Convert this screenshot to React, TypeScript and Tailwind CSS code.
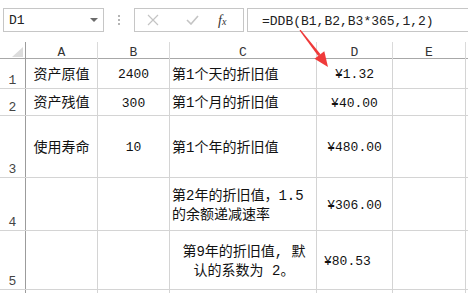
import React from 'react'

const mono = "font-['Liberation_Mono','Noto_Sans_CJK_SC',monospace]"

type Row = {
  n: number
  h: string
  a?: string
  b?: string
  c?: React.ReactNode
  cAlign?: string
  d?: string
  dAlign?: string
}

const rows: Row[] = [
  { n: 1, h: 'h-[30px]', a: '资产原值', b: '2400', c: '第1个天的折旧值', d: '¥1.32' },
  { n: 2, h: 'h-[27px]', a: '资产残值', b: '300', c: '第1个月的折旧值', d: '¥40.00' },
  { n: 3, h: 'h-[62px]', a: '使用寿命', b: '10', c: '第1个年的折旧值', d: '¥480.00' },
  {
    n: 4,
    h: 'h-[53px]',
    c: (
      <>
        第2年的折旧值，1.5
        <br />
        的余额递减速率
      </>
    ),
    d: '¥306.00',
  },
  {
    n: 5,
    h: 'h-[59px]',
    c: (
      <>
        第9年的折旧值, 默
        <br />
        认的系数为 2。
      </>
    ),
    cAlign: 'justify-center text-center',
    d: '¥80.53',
    dAlign: 'justify-start pl-[7px]',
  },
]

const cols = 'grid grid-cols-[26px_72px_72px_147px_76px_73px_1fr]'

function FormulaBar() {
  return (
    <div className="flex h-[42px] items-start pt-[8px] bg-white">
      <div className="ml-[3px] flex h-[24px] w-[101px] items-center justify-between border border-[#c6c6c6] pl-[5px] pr-[5px]">
        <span className={`${mono} pt-[2px] text-[13px] text-[#222]`}>D1</span>
        <svg width="8" height="5" viewBox="0 0 8 5">
          <path d="M0 0h8L4 4z" fill="#6b6b6b" />
        </svg>
      </div>
      <div className="flex h-[24px] w-[30px] flex-col items-center justify-center gap-[2px]">
        <span className="h-[2px] w-[2px] bg-[#b5b5b5]" />
        <span className="h-[2px] w-[2px] bg-[#b5b5b5]" />
        <span className="h-[2px] w-[2px] bg-[#b5b5b5]" />
      </div>
      <div className="flex h-[24px] w-[110px] items-center border border-[#c6c6c6]">
        <svg className="ml-[12px]" width="12" height="12" viewBox="0 0 12 12">
          <path d="M1 1l10 10M11 1L1 11" stroke="#c4c4c4" strokeWidth="1.2" />
        </svg>
        <svg className="ml-[27px]" width="13" height="10" viewBox="0 0 13 10">
          <path d="M1 5l4 4 7-8" stroke="#c4c4c4" strokeWidth="1.6" fill="none" />
        </svg>
        <span className="ml-[19px] font-['Liberation_Serif',serif] text-[14px] italic text-[#333]">
          f<span className="text-[10px]">x</span>
        </span>
      </div>
      <div className="ml-[3px] flex h-[24px] flex-1 items-center border border-r-0 border-[#c6c6c6] pl-[14px]">
        <span className={`${mono} pt-[3px] text-[13px] text-[#222]`}>=DDB(B1,B2,B3*365,1,2)</span>
      </div>
    </div>
  )
}

function Header() {
  const letters = ['A', 'B', 'C', 'D', 'E']
  return (
    <div className={`${cols} h-[17px] border-b border-[#a8a8a8]`}>
      <div className="relative border-r border-[#9c9c9c]">
        <svg className="absolute left-[12px] top-[5px]" width="11" height="10" viewBox="0 0 11 10">
          <path d="M11 0v10H0z" fill="#dcdcdc" />
        </svg>
      </div>
      {letters.map((l) => (
        <div
          key={l}
          className={`${mono} flex items-center justify-center border-r border-[#dadada] pt-[1px] text-[13px] text-[#333]`}
        >
          {l}
        </div>
      ))}
      <div />
    </div>
  )
}

function DataRow({ r }: { r: Row }) {
  const cell = 'flex items-center border-r border-[#d4d4d4] pt-[3px]'
  return (
    <div className={`${cols} ${r.h} border-b border-[#d4d4d4]`}>
      <div
        className={`${mono} flex items-end justify-center border-r border-[#9c9c9c] text-[13px] leading-[14px] text-[#444]`}
      >
        {r.n}
      </div>
      <div className={`${cell} justify-center ${mono} text-[14px] text-[#111]`}>{r.a}</div>
      <div className={`${cell} justify-center ${mono} text-[13px] text-[#111]`}>{r.b}</div>
      <div className={`${cell} ${r.cAlign ?? 'justify-start'} pl-[2px] ${mono} text-[14px] leading-[19px] text-[#111]`}>
        <span>{r.c}</span>
      </div>
      <div className={`${cell} ${r.dAlign ?? 'justify-center'} ${mono} text-[13px] text-[#111]`}>{r.d}</div>
      <div className={cell} />
      <div />
    </div>
  )
}

export default function App() {
  return (
    <div className="relative h-[293px] w-[468px] overflow-hidden bg-white">
      <FormulaBar />
      <Header />
      {rows.map((r) => (
        <DataRow key={r.n} r={r} />
      ))}
      <div className={`${cols} h-[20px]`}>
        <div className="border-r border-[#9c9c9c]" />
        <div className="border-r border-[#d4d4d4]" />
        <div className="border-r border-[#d4d4d4]" />
        <div className="border-r border-[#d4d4d4]" />
        <div className="border-r border-[#d4d4d4]" />
        <div className="border-r border-[#d4d4d4]" />
        <div />
      </div>
      <svg className="pointer-events-none absolute left-0 top-0" width="468" height="293" viewBox="0 0 468 293">
        <path d="M299.5 30.5L300.6 29.7L320.5 54.2L318.2 56z" fill="#ef3a3a" />
        <path d="M328 67L314.5 58.8L324.3 51.2z" fill="#ef3a3a" />
      </svg>
    </div>
  )
}
